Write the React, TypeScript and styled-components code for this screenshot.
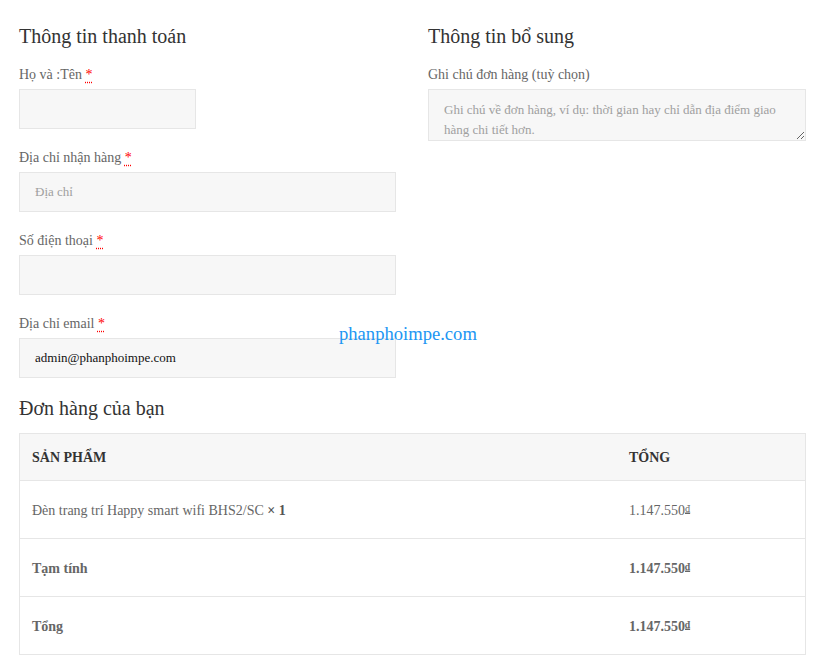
import styled, { createGlobalStyle } from "styled-components"

const GlobalStyle = createGlobalStyle`
  body {
    margin: 0;
    background: #fff;
    font-family: "Liberation Serif", "Times New Roman", serif;
    color: #666;
  }
`

const orderRows = [
  { name: "Đèn trang trí Happy smart wifi BHS2/SC", qty: 1, total: "1.147.550", strong: false },
  { name: "Tạm tính", total: "1.147.550", strong: true },
  { name: "Tổng", total: "1.147.550", strong: true },
]

const Required = () => <Abbr title="bắt buộc">*</Abbr>

const App = () => {
  return (
    <Page>
      <GlobalStyle />
      <Columns>
        <Column>
          <Heading>Thông tin thanh toán</Heading>
          <Field>
            <Label>
              Họ và :Tên <Required />
            </Label>
            <Input type="text" short />
          </Field>
          <Field>
            <Label>
              Địa chỉ nhận hàng <Required />
            </Label>
            <Input type="text" placeholder="Địa chỉ" />
          </Field>
          <Field>
            <Label>
              Số điện thoại <Required />
            </Label>
            <Input type="tel" />
          </Field>
          <Field>
            <Label>
              Địa chỉ email <Required />
            </Label>
            <Input type="email" defaultValue="admin@phanphoimpe.com" />
          </Field>
        </Column>
        <Column>
          <Heading>Thông tin bổ sung</Heading>
          <Field>
            <Label>Ghi chú đơn hàng (tuỳ chọn)</Label>
            <Notes placeholder="Ghi chú về đơn hàng, ví dụ: thời gian hay chỉ dẫn địa điểm giao hàng chi tiết hơn." />
          </Field>
        </Column>
      </Columns>

      <Watermark>phanphoimpe.com</Watermark>

      <OrderHeading>Đơn hàng của bạn</OrderHeading>
      <OrderTable>
        <thead>
          <tr>
            <HeadCell>SẢN PHẨM</HeadCell>
            <HeadCell total>TỔNG</HeadCell>
          </tr>
        </thead>
        <tbody>
          {orderRows.map((row, i) => (
            <tr key={i}>
              <Cell strong={row.strong}>
                {row.name}
                {row.qty ? <Qty>&nbsp;× {row.qty}</Qty> : null}
              </Cell>
              <Cell total strong={row.strong}>
                {row.total}
                <Currency>₫</Currency>
              </Cell>
            </tr>
          ))}
        </tbody>
      </OrderTable>
    </Page>
  )
}

const Page = styled.div`
  position: relative;
  width: 787px;
  margin-left: 19px;
  padding-top: 24px;
`

const Columns = styled.div`
  display: grid;
  grid-template-columns: 377px 378px;
  column-gap: 32px;
`

const Column = styled.div`
  display: flex;
  flex-direction: column;
`

const Heading = styled.h3`
  margin: 0 0 16px;
  font-size: 20px;
  font-weight: normal;
  line-height: 24px;
  color: #333;
`

const Field = styled.div`
  display: flex;
  flex-direction: column;
  margin-bottom: 18px;
`

const Label = styled.label`
  font-size: 14px;
  line-height: 20px;
  padding-top: 1px;
  margin-bottom: 4px;
  color: #666;
`

const Abbr = styled.abbr`
  color: red;
  text-decoration: underline dotted;
  text-underline-offset: 3px;
  cursor: help;
`

const Input = styled.input<{ short?: boolean }>`
  box-sizing: border-box;
  width: ${(props) => (props.short ? "177px" : "100%")};
  height: 40px;
  padding: 0 15px;
  background: #f7f7f7;
  border: 1px solid #e6e6e6;
  outline: none;
  font-family: "Liberation Serif", serif;
  font-size: 13px;
  color: #111;

  &::placeholder {
    color: #a0a0a0;
  }
`

const Notes = styled.textarea`
  box-sizing: border-box;
  width: 100%;
  height: 52px;
  padding: 10px 15px;
  background: #f7f7f7;
  border: 1px solid #e6e6e6;
  outline: none;
  resize: vertical;
  overflow: hidden;
  font-family: "Liberation Serif", serif;
  font-size: 13px;
  line-height: 20px;

  &::placeholder {
    color: #a0a0a0;
  }
`

const Watermark = styled.div`
  position: absolute;
  left: 320px;
  top: 323px;
  font-size: 18.6px;
  color: #2196f3;
  pointer-events: none;
`

const OrderHeading = styled.h3`
  margin: 0 0 13px;
  font-size: 20px;
  font-weight: normal;
  line-height: 24px;
  color: #333;
`

const OrderTable = styled.table`
  width: 100%;
  border-collapse: collapse;
  border: 1px solid #e6e6e6;
  font-size: 14px;
`

const HeadCell = styled.th<{ total?: boolean }>`
  text-align: left;
  padding: 14px 12px 13px;
  line-height: 19px;
  background: #f7f7f7;
  border-bottom: 1px solid #e6e6e6;
  color: #333;
  font-weight: bold;
  width: ${(props) => (props.total ? "164px" : "auto")};
`

const Cell = styled.td<{ total?: boolean; strong?: boolean }>`
  height: 19px;
  padding: 20px 12px 18px;
  line-height: 19px;
  border-top: 1px solid #e6e6e6;
  color: #666;
  font-weight: ${(props) => (props.strong ? "bold" : "normal")};
`

const Qty = styled.strong`
  color: #555;
`

const Currency = styled.span`
  position: relative;
  top: -3px;
  font-size: 10px;
  line-height: 0;
  text-decoration: underline;
`

export default App
